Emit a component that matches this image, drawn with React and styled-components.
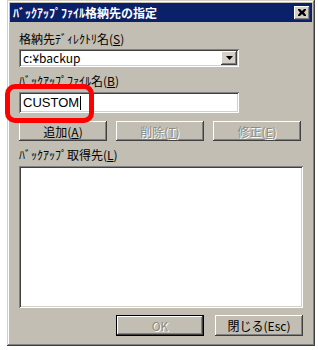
import React from "react";
import styled, { createGlobalStyle } from "styled-components";

const GlobalStyle = createGlobalStyle`
  html, body {
    margin: 0;
    padding: 0;
    background: #ffffff;
  }
  body {
    font-family: "Noto Sans CJK JP", "Liberation Sans", sans-serif;
    font-size: 12px;
  }
`;

const Page = styled.div`
  width: 318px;
  height: 350px;
  padding: 0 3px 0 7px;
  box-sizing: border-box;
`;

const Window = styled.div`
  position: relative;
  width: 308px;
  height: 346px;
  box-sizing: border-box;
  padding: 3px;
  background: #c2beb3;
  box-shadow: inset -1px -1px #404040, inset 1px 1px #d4d0c8,
    inset -2px -2px #808080, inset 2px 2px #ffffff;
  display: flex;
  flex-direction: column;
`;

const TitleBar = styled.div`
  height: 19px;
  background: #0a216a;
  display: flex;
  align-items: center;
  justify-content: space-between;
  padding: 0 2px 0 3px;
`;

const Title = styled.span`
  color: #ffffff;
  font-weight: bold;
  font-size: 12px;
  line-height: 19px;
`;

const CloseButton = styled.div`
  width: 16px;
  height: 14px;
  background: #d4d0c8;
  box-shadow: inset -1px -1px #404040, inset 1px 1px #ffffff,
    inset -2px -2px #808080;
  display: flex;
  align-items: center;
  justify-content: center;
`;

const Body = styled.div`
  padding: 9px 9px 0 9px;
  display: flex;
  flex-direction: column;
`;

const Label = styled.div`
  height: 15px;
  line-height: 15px;
  color: #000000;
  margin-bottom: ${(p) => p.$gap}px;
  white-space: nowrap;
`;

const Key = styled.span`
  text-decoration: underline;
`;

const Sunken = styled.div`
  position: relative;
  background: #ffffff;
  box-sizing: border-box;
  box-shadow: inset 1px 1px #808080, inset -1px -1px #ffffff,
    inset 2px 2px #404040, inset -2px -2px #d4d0c8;
`;

const Combo = styled(Sunken)`
  width: 220px;
  height: 18px;
  display: flex;
  align-items: center;
  padding: 2px;
  margin-bottom: 6px;
`;

const ComboText = styled.span`
  flex: 1;
  padding-left: 2px;
  line-height: 14px;
  font-size: 12px;
`;

const DropButton = styled.div`
  width: 16px;
  height: 14px;
  background: #d4d0c8;
  box-shadow: inset -1px -1px #404040, inset 1px 1px #ffffff,
    inset -2px -2px #808080;
  display: flex;
  align-items: center;
  justify-content: center;
`;

const TextBox = styled(Sunken)`
  width: 220px;
  height: 21px;
  padding: 2px 4px;
  display: flex;
  align-items: center;
  margin-bottom: 8px;
  font-family: "Liberation Sans", sans-serif;
  font-size: 13px;
`;

const Caret = styled.span`
  display: inline-block;
  width: 1px;
  height: 14px;
  background: #000000;
  margin-left: 1px;
`;

const Highlight = styled.div`
  position: absolute;
  left: -14px;
  top: -8px;
  width: 79px;
  height: 29px;
  border: 5px solid #ff0000;
  border-radius: 10px;
`;

const ButtonRow = styled.div`
  display: flex;
  gap: ${(p) => p.$gap}px;
  justify-content: ${(p) => (p.$end ? "flex-end" : "flex-start")};
  margin-bottom: ${(p) => p.$mb || 0}px;
`;

const Button = styled.div`
  width: 88px;
  height: ${(p) => p.$h}px;
  box-sizing: border-box;
  background: #c2beb3;
  display: flex;
  align-items: center;
  justify-content: center;
  font-size: 12px;
  color: ${(p) => (p.$disabled ? "#8e8b82" : "#000000")};
  text-shadow: ${(p) => (p.$disabled ? "1px 1px #ffffff" : "none")};
  box-shadow: ${(p) =>
    p.$default
      ? "inset 0 0 0 1px #000, inset -2px -2px #404040, inset 2px 2px #ffffff, inset -3px -3px #808080"
      : "inset -1px -1px #404040, inset 1px 1px #ffffff, inset -2px -2px #808080"};
`;

const ListBox = styled(Sunken)`
  width: 284px;
  height: 142px;
  margin-bottom: 7px;
`;

export default function App() {
  return (
    <Page>
      <GlobalStyle />
      <Window>
        <TitleBar>
          <Title>ﾊﾞｯｸｱｯﾌﾟﾌｧｲﾙ格納先の指定</Title>
          <CloseButton>
            <svg width="8" height="7" viewBox="0 0 8 7">
              <path
                d="M0 0h2l2 2 2-2h2v1L6 3.5 8 6v1H6L4 5 2 7H0V6l2-2.5L0 1z"
                fill="#000"
              />
            </svg>
          </CloseButton>
        </TitleBar>
        <Body>
          <Label $gap={3}>
            格納先ﾃﾞｨﾚｸﾄﾘ名(<Key>S</Key>)
          </Label>
          <Combo>
            <ComboText>c:¥backup</ComboText>
            <DropButton>
              <svg width="7" height="4" viewBox="0 0 7 4">
                <path d="M0 0h7L3.5 4z" fill="#000" />
              </svg>
            </DropButton>
          </Combo>
          <Label $gap={4}>
            ﾊﾞｯｸｱｯﾌﾟﾌｧｲﾙ名(<Key>B</Key>)
          </Label>
          <TextBox>
            CUSTOM
            <Caret />
            <Highlight />
          </TextBox>
          <ButtonRow $gap={9} $mb={6}>
            <Button $h={20}>
              追加(<Key>A</Key>)
            </Button>
            <Button $h={20} $disabled>
              削除(<Key>T</Key>)
            </Button>
            <Button $h={20} $disabled>
              修正(<Key>E</Key>)
            </Button>
          </ButtonRow>
          <Label $gap={4}>
            ﾊﾞｯｸｱｯﾌﾟ取得先(<Key>L</Key>)
          </Label>
          <ListBox />
          <ButtonRow $gap={11} $end>
            <Button $h={21} $disabled $default>
              OK
            </Button>
            <Button $h={21}>閉じる(Esc)</Button>
          </ButtonRow>
        </Body>
      </Window>
    </Page>
  );
}
